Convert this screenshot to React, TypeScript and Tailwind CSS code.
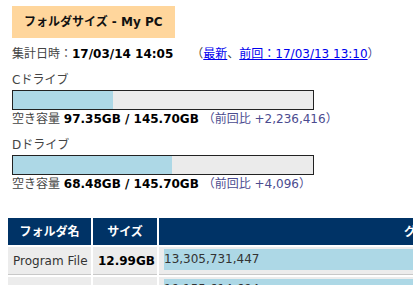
const drives = [
  { name: "Cドライブ", free: "97.35GB", total: "145.70GB", used: 33.3, diff: "+2,236,416" },
  { name: "Dドライブ", free: "68.48GB", total: "145.70GB", used: 53, diff: "+4,096" },
];

const folders = [
  { name: "Program File", size: "12.99GB", bytes: "13,305,731,447", pct: 70 },
  { name: "Windows", size: "17.84GB", bytes: "19,155,614,694", pct: 93 },
  { name: "Users", size: "8.12GB", bytes: "8,718,330,112", pct: 44 },
];

export default function App() {
  return (
    <div className="h-screen overflow-hidden bg-white text-[12px] text-[#444] font-['DejaVu_Sans','Noto_Sans_CJK_JP',sans-serif]">
      <div className="px-[12px] pt-[6px]">
        <div className="inline-flex h-[32px] items-center bg-[#ffd69c] px-[12px] text-[12px] font-bold text-[#111]">
          フォルダサイズ - My PC
        </div>

        <div className="mt-[7px] flex h-[18px] items-center leading-[18px]">
          <span>集計日時：</span>
          <span className="font-bold text-black">17/03/14 14:05</span>
          <span className="ml-[18px]">（</span>
          <a href="#" className="text-[#00e] underline">最新</a>
          <span>、</span>
          <a href="#" className="text-[#00e] underline">前回：17/03/13 13:10</a>
          <span className="text-[#4b4b8f]">）</span>
        </div>

        <div className="mt-[8px] flex flex-col gap-[8px]">
          {drives.map((d) => (
            <div key={d.name}>
              <div className="h-[18px] leading-[18px]">{d.name}</div>
              <div className="mt-px h-[20px] w-[302px] border border-[#222] bg-[#ebebeb]">
                <div className="h-full bg-[#add8e6]" style={{ width: `${d.used}%` }} />
              </div>
              <div className="h-[18px] leading-[18px] whitespace-nowrap">
                空き容量 <span className="font-bold text-black">{d.free} / {d.total}</span>{" "}
                <span className="text-[#4b4b8f]">（前回比 {d.diff}）</span>
              </div>
            </div>
          ))}
        </div>
      </div>

      <table className="mt-[23px] ml-[6px] w-[681px] table-fixed border-separate border-spacing-[2px]">
        <colgroup>
          <col className="w-[83px]" />
          <col className="w-[64px]" />
          <col />
        </colgroup>
        <thead>
          <tr className="bg-[#003366] text-white">
            <th className="h-[27px] text-center font-bold">フォルダ名</th>
            <th className="h-[27px] text-center font-bold">サイズ</th>
            <th className="h-[27px] text-center font-bold">グラフ</th>
          </tr>
        </thead>
        <tbody>
          {folders.map((f) => (
            <tr key={f.name} className="bg-[#ececec]">
              <td className="h-[28px] border-b border-[#c8c8c8] px-[5px] align-middle whitespace-nowrap text-[#333]">{f.name}</td>
              <td className="h-[28px] border-b border-[#c8c8c8] px-[5px] text-center align-middle font-bold text-black">{f.size}</td>
              <td className="h-[28px] border-b border-[#c8c8c8] pl-[5px] pt-[2px] pb-[4px] align-top">
                <div className="h-[21px] bg-[#add8e6] leading-[21px] text-[#333] whitespace-nowrap" style={{ width: `${f.pct}%` }}>
                  {f.bytes}
                </div>
              </td>
            </tr>
          ))}
        </tbody>
      </table>
    </div>
  );
}
